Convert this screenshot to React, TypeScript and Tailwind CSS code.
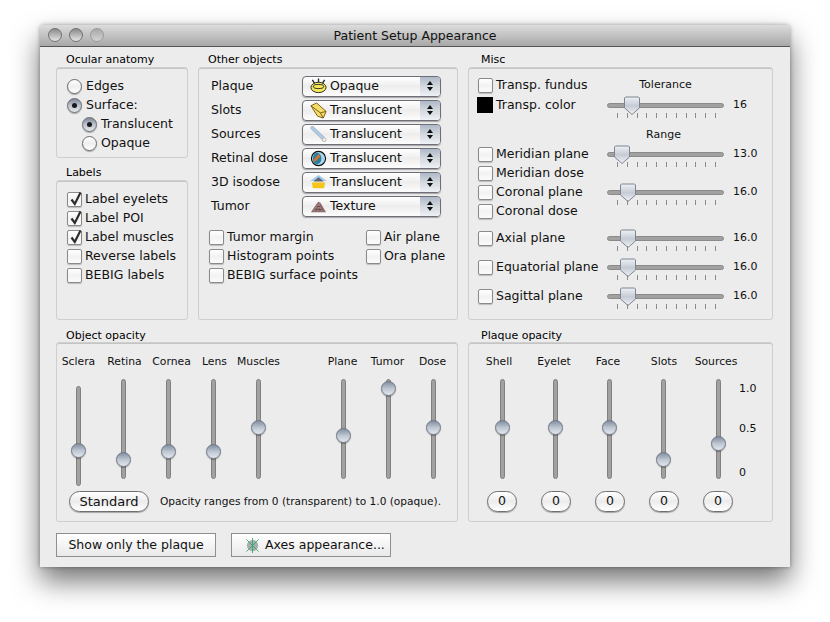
import type { ReactNode } from "react";

function Panel({ title, className, boxClass, titleClass, children }: { title: string; className?: string; boxClass?: string; titleClass?: string; children: ReactNode }) {
  return (
    <div className={"flex flex-col " + (className ?? "")}>
      <div className={"h-[15px] text-[11px] leading-[15px] text-black " + (titleClass ?? "pl-[10px]")}>{title}</div>
      <div className={"flex-1 rounded-[3px] border border-[#cfcfcf] bg-[#ececec] shadow-[inset_0_1px_0_#c4c4c4] " + (boxClass ?? "")}>{children}</div>
    </div>
  );
}

function Radio({ on, label, indent }: { on?: boolean; label: string; indent?: boolean }) {
  return (
    <div className={"flex h-[19px] items-center gap-[4px] " + (indent ? "pl-[25px]" : "pl-[10px]")}>
      <span
        className={
          "flex h-[15px] w-[15px] items-center justify-center rounded-full border border-[#6c6c6c] shadow-[0_1px_1px_rgba(0,0,0,0.3)] " +
          (on ? "bg-gradient-to-b from-[#7f899b] via-[#bcc3cf] to-[#e4e8ee]" : "bg-gradient-to-b from-[#ffffff] via-[#efefef] to-[#ffffff]")
        }
      >
        {on && <span className="h-[5px] w-[5px] rounded-full bg-[#1a1a1a]" />}
      </span>
      <span>{label}</span>
    </div>
  );
}

function Check({ on, label, className }: { on?: boolean; label: string; className?: string }) {
  return (
    <div className={"flex h-[19px] items-center gap-[3px] " + (className ?? "")}>
      <span className="relative h-[15px] w-[15px] shrink-0 rounded-[2px] border border-[#8a8a8a] bg-gradient-to-b from-[#ffffff] via-[#f2f2f2] to-[#fbfbfb] shadow-[0_1px_1px_rgba(0,0,0,0.2)]">
        {on && (
          <svg viewBox="0 0 16 16" className="absolute -top-[2px] left-0 h-[16px] w-[16px]">
            <path d="M3.5 8.5 L6.8 13 L12.5 1.5" fill="none" stroke="#2b2b2b" strokeWidth="2.2" />
          </svg>
        )}
      </span>
      <span className="whitespace-nowrap">{label}</span>
    </div>
  );
}

function PlaqueIcon() {
  return (
    <svg viewBox="0 0 18 18" className="h-[17px] w-[17px]">
      <path d="M2.5 2 L5 6 M9 0.5 L9 5 M15.5 2 L13 6" stroke="#222" strokeWidth="1.4" />
      <ellipse cx="9" cy="10" rx="8" ry="5.5" fill="#f4e85a" stroke="#222" strokeWidth="1" />
      <ellipse cx="9" cy="9" rx="5.5" ry="2.2" fill="#f4e85a" stroke="#222" strokeWidth="1" />
    </svg>
  );
}
function SlotsIcon() {
  return (
    <svg viewBox="0 0 18 18" className="h-[17px] w-[17px]">
      <path d="M1 4 L7 1 L17 10 L14 17 L8 15 Z" fill="#f3de6a" stroke="#7a5a10" strokeWidth="1" />
      <path d="M1 4 L11 11.5 L14 17 M11 11.5 L17 10" fill="none" stroke="#7a5a10" strokeWidth="1" />
    </svg>
  );
}
function SourcesIcon() {
  return (
    <svg viewBox="0 0 18 18" className="h-[17px] w-[17px]">
      <path d="M2.5 2 L13.5 12.5" stroke="#b4b4b4" strokeWidth="4" strokeLinecap="round" />
      <path d="M2.5 2 L13.5 12.5" stroke="#a6cdf0" strokeWidth="2.4" strokeLinecap="round" />
      <circle cx="15" cy="14.5" r="2" fill="#f2f2f2" stroke="#b4b4b4" />
    </svg>
  );
}
function DoseIcon() {
  return (
    <svg viewBox="0 0 18 18" className="h-[17px] w-[17px]">
      <circle cx="9" cy="9" r="7.5" fill="#a9d4f0" stroke="#111" strokeWidth="1.2" />
      <ellipse cx="7.5" cy="9" rx="4.5" ry="6" fill="#2a7f9e" />
      <path d="M4.5 11.5 L10 5.5" stroke="#d8722a" strokeWidth="3" />
    </svg>
  );
}
function IsoIcon() {
  return (
    <svg viewBox="0 0 18 18" className="h-[17px] w-[17px]">
      <path d="M0 7.5 L9 1 L18 7.5 Z" fill="#9ccbf2" />
      <path d="M3.5 8 L9 3.5 L14.5 8 Z" fill="#666" />
      <path d="M2 9 H16 L15 15 H3 Z" fill="#f5c518" />
    </svg>
  );
}
function TumorIcon() {
  return (
    <svg viewBox="0 0 18 18" className="h-[17px] w-[17px]">
      <path d="M1 15 L7 6 L9 4 L11 5 L17 15 Z" fill="#8a6a6a" />
      <path d="M4 14 L8 7 M8 14 L10 6 M13 14 L10 9" stroke="#b88c8c" strokeWidth="1" />
      <path d="M5 12 H13 M7 9 H11" stroke="#5a4a4a" strokeWidth="1" />
    </svg>
  );
}

function Popup({ label, value, icon }: { label: string; value: string; icon: ReactNode }) {
  return (
    <div className="flex h-[24px] items-center">
      <span className="w-[103px] pl-[12px]">{label}</span>
      <div className="flex h-[21px] w-[139px] overflow-hidden rounded-[4px] border border-[#6f6f78] bg-gradient-to-b from-[#ffffff] via-[#ededed] to-[#fdfdfd] shadow-[0_1px_1px_rgba(0,0,0,0.3)]">
        <div className="flex flex-1 items-center pl-[7px]">
          <span className="mr-[2px] flex w-[18px] justify-start">{icon}</span>
          <span>{value}</span>
        </div>
        <div className="flex w-[20px] flex-col items-center justify-center gap-[2px] bg-gradient-to-b from-[#aeb8c7] via-[#d4d9e0] to-[#eef0f4]">
          <span className="h-0 w-0 border-x-[3px] border-b-[4px] border-x-transparent border-b-[#111]" />
          <span className="h-0 w-0 border-x-[3px] border-t-[4px] border-x-transparent border-t-[#111]" />
        </div>
      </div>
    </div>
  );
}

function HSlider({ pos, value }: { pos: number; value: string }) {
  return (
    <div className="ml-auto flex items-center">
      <div className="relative h-[5px] w-[117px] rounded-full border border-[#8a8a8a] bg-[#a3a0a0]">
        <svg viewBox="0 0 18 20" className="absolute top-[-8px] h-[20px] w-[18px]" style={{ left: pos - 10 }}>
          <defs>
            <linearGradient id="ht" x1="0" y1="0" x2="0" y2="1">
              <stop offset="0" stopColor="#eef1f5" />
              <stop offset="0.5" stopColor="#c5cbd5" />
              <stop offset="1" stopColor="#f2f4f7" />
            </linearGradient>
          </defs>
          <path d="M2.5 1 H15.5 L16.5 2 V12 L9 18.5 L1.5 12 V2 Z" fill="url(#ht)" stroke="#7f8590" strokeWidth="1" />
        </svg>
        <div className="absolute left-[9px] top-[9px] flex w-[99px] justify-between">
          {Array.from({ length: 11 }).map((_, i) => (
            <span key={i} className="h-[5px] w-px bg-[#8a8a8a]" />
          ))}
        </div>
      </div>
      <span className="w-[48px] pl-[9px] text-[11px]">{value}</span>
    </div>
  );
}

function MiscRow({ label, pos, value, className }: { label: string; pos?: number; value?: string; className?: string }) {
  return (
    <div className={"flex h-[19px] items-center " + (className ?? "")}>
      <Check label={label} className="pl-[9px]" />
      {pos !== undefined && <HSlider pos={pos} value={value ?? ""} />}
    </div>
  );
}

function VSlider({ label, pos, className, trackClass, labelClass }: { label: string; pos: number; className?: string; trackClass?: string; labelClass?: string }) {
  return (
    <div className={"flex flex-col items-center " + (className ?? "")}>
      <div className={"h-[30px] whitespace-nowrap text-[10.8px] leading-[38px] " + (labelClass ?? "")}>{label}</div>
      <div className={"relative mt-[6px] h-[100px] w-[5px] rounded-full border border-[#808080] bg-[#a3a0a0] " + (trackClass ?? "")}>
        <span
          className="absolute left-[-6px] h-[15px] w-[15px] rounded-full border border-[#6f7786] bg-gradient-to-b from-[#84909f] via-[#bcc5d1] to-[#e4e8ee] shadow-[0_1px_1px_rgba(0,0,0,0.3)]"
          style={{ top: pos - 8 }}
        />
      </div>
    </div>
  );
}

function PillButton({ label, className }: { label: string; className?: string }) {
  return (
    <div className={"flex h-[21px] items-center justify-center rounded-full border border-[#6f6f6f] bg-gradient-to-b from-[#ffffff] via-[#ececec] to-[#ffffff] shadow-[0_1px_1px_rgba(0,0,0,0.3)] " + (className ?? "")}>
      {label}
    </div>
  );
}

function Bevel({ className, children }: { className?: string; children: ReactNode }) {
  return (
    <div className={"flex h-[24px] items-center border border-[#8f8f8f] bg-gradient-to-b from-[#ffffff] to-[#e9e9e9] " + (className ?? "")}>
      {children}
    </div>
  );
}

const plaqueSliders = [
  { label: "Shell", pos: 48, labelClass: "-translate-x-[3px]" },
  { label: "Eyelet", pos: 48, labelClass: "-translate-x-[2px]" },
  { label: "Face", pos: 48, labelClass: "-translate-x-[2px]" },
  { label: "Slots", pos: 80, labelClass: "" },
  { label: "Sources", pos: 64, labelClass: "-translate-x-[2px]" },
];

export default function App() {
  return (
    <div className="h-[622px] w-[830px] bg-white pl-[40px] pt-[25px] font-['DejaVu_Sans',sans-serif] text-[12.5px] text-[#111]">
      <div className="h-[542px] w-[750px] overflow-hidden rounded-t-[4px] bg-[#ececec] shadow-[0_14px_28px_rgba(0,0,0,0.55),0_0_4px_rgba(0,0,0,0.35)]">
        <div className="relative flex h-[22px] items-center justify-center border-b border-[#555] bg-gradient-to-b from-[#dcdcdc] to-[#a8a8a8] pt-[2px] text-[12.5px] text-[#111]">
          <div className="absolute left-[8px] top-[3px] flex gap-[7px]">
            <span className="h-[14px] w-[14px] rounded-full border border-[#707070] bg-gradient-to-b from-[#8b8b8b] to-[#e6e6e6]" />
            <span className="h-[14px] w-[14px] rounded-full border border-[#707070] bg-gradient-to-b from-[#8b8b8b] to-[#e6e6e6]" />
            <span className="h-[14px] w-[14px] rounded-full border border-[#9a9a9a] bg-gradient-to-b from-[#a8a8a8] to-[#d4d4d4]" />
          </div>
          Patient Setup Appearance
        </div>

        <div className="flex flex-col pl-[16px] pt-[5px]">
          <div className="flex h-[268px] gap-[10px]">
            <div className="flex w-[132px] flex-col gap-[7px]">
              <Panel title="Ocular anatomy" className="h-[106px]" boxClass="pt-[9px]">
                <Radio label="Edges" />
                <Radio on label="Surface:" />
                <Radio on indent label="Translucent" />
                <Radio indent label="Opaque" />
              </Panel>
              <Panel title="Labels" className="flex-1" boxClass="pt-[9px]">
                <Check on label="Label eyelets" className="pl-[10px]" />
                <Check on label="Label POI" className="pl-[10px]" />
                <Check on label="Label muscles" className="pl-[10px]" />
                <Check label="Reverse labels" className="pl-[10px]" />
                <Check label="BEBIG labels" className="pl-[10px]" />
              </Panel>
            </div>

            <Panel title="Other objects" className="w-[260px]" boxClass="pt-[6px]">
              <Popup label="Plaque" value="Opaque" icon={<PlaqueIcon />} />
              <Popup label="Slots" value="Translucent" icon={<SlotsIcon />} />
              <Popup label="Sources" value="Translucent" icon={<SourcesIcon />} />
              <Popup label="Retinal dose" value="Translucent" icon={<DoseIcon />} />
              <Popup label="3D isodose" value="Translucent" icon={<IsoIcon />} />
              <Popup label="Tumor" value="Texture" icon={<TumorIcon />} />
              <div className="mt-[10px] flex pl-[10px]">
                <div className="w-[157px]">
                  <Check label="Tumor margin" />
                  <Check label="Histogram points" />
                  <Check label="BEBIG surface points" />
                </div>
                <div>
                  <Check label="Air plane" />
                  <Check label="Ora plane" />
                </div>
              </div>
            </Panel>

            <Panel title="Misc" className="w-[305px]" boxClass="pt-[8px]" titleClass="pl-[13px]">
              <div className="flex h-[19px] items-center">
                <div className="w-[138px]">
                  <Check label="Transp. fundus" className="pl-[9px]" />
                </div>
                <span className="w-[117px] text-center text-[11px]">Tolerance</span>
              </div>
              <div className="flex h-[20px] items-center">
                <span className="ml-[8px] h-[16px] w-[16px] bg-black" />
                <span className="ml-[3px]">Transp. color</span>
                <HSlider pos={25} value="16" />
              </div>
              <div className="mt-[11px] flex h-[19px] items-center">
                <span className="ml-[136px] w-[117px] text-center text-[11px]">Range</span>
              </div>
              <MiscRow label="Meridian plane" pos={15} value="13.0" />
              <MiscRow label="Meridian dose" />
              <MiscRow label="Coronal plane" pos={21} value="16.0" />
              <MiscRow label="Coronal dose" />
              <MiscRow label="Axial plane" pos={21} value="16.0" className="mt-[8px]" />
              <MiscRow label="Equatorial plane" pos={21} value="16.0" className="mt-[10px]" />
              <MiscRow label="Sagittal plane" pos={21} value="16.0" className="mt-[10px]" />
            </Panel>
          </div>

          <div className="mt-[7px] flex h-[195px] gap-[10px]">
            <Panel title="Object opacity" className="w-[402px]" titleClass="pl-[10px] pt-px">
              <div className="-ml-px flex">
                <VSlider label="Sclera" pos={64} className="w-[45px]" trackClass="translate-y-[7px]" />
                <VSlider label="Retina" pos={80} className="w-[45px]" labelClass="translate-x-px" />
                <VSlider label="Cornea" pos={72} className="w-[45px]" labelClass="translate-x-[3px]" />
                <VSlider label="Lens" pos={72} className="w-[45px]" labelClass="translate-x-px" />
                <VSlider label="Muscles" pos={48} className="mr-[40px] w-[45px]" />
                <VSlider label="Plane" pos={56} className="w-[45px]" labelClass="-translate-x-px" />
                <VSlider label="Tumor" pos={9} className="w-[45px]" labelClass="-translate-x-px" />
                <VSlider label="Dose" pos={48} className="w-[45px]" labelClass="-translate-x-px" />
              </div>
              <div className="mt-[12px] flex items-center pl-[12px]">
                <PillButton label="Standard" className="w-[80px] text-[13px]" />
                <span className="ml-[11px] text-[10.6px]">Opacity ranges from 0 (transparent) to 1.0 (opaque).</span>
              </div>
            </Panel>

            <Panel title="Plaque opacity" className="w-[305px]" titleClass="pl-[13px] pt-px">
              <div className="flex">
                <div className="flex">
                  {plaqueSliders.map((s) => (
                    <div key={s.label} className="flex w-[54px] flex-col items-center first:ml-[6px]">
                      <VSlider label={s.label} pos={s.pos} labelClass={s.labelClass} />
                      <PillButton label="0" className="mt-[12px] w-[30px]" />
                    </div>
                  ))}
                </div>
                <div className="ml-[-6px] flex flex-col pt-[38px] text-[11px]">
                  <span className="h-[40px]">1.0</span>
                  <span className="h-[44px]">0.5</span>
                  <span>0</span>
                </div>
              </div>
            </Panel>
          </div>

          <div className="mt-[11px] flex gap-[15px]">
            <Bevel className="w-[160px] justify-center">Show only the plaque</Bevel>
            <Bevel className="w-[160px] gap-[5px] pl-[13px]">
              <svg viewBox="0 0 16 16" className="h-[15px] w-[15px]">
                <circle cx="8" cy="8" r="6" fill="#a8aeb0" />
                <path d="M8 0 V16 M1.5 1.5 L14.5 14.5 M14.5 1.5 L1.5 14.5" stroke="#2aa86a" strokeWidth="0.9" />
              </svg>
              Axes appearance...
            </Bevel>
          </div>
        </div>
      </div>
    </div>
  );
}
